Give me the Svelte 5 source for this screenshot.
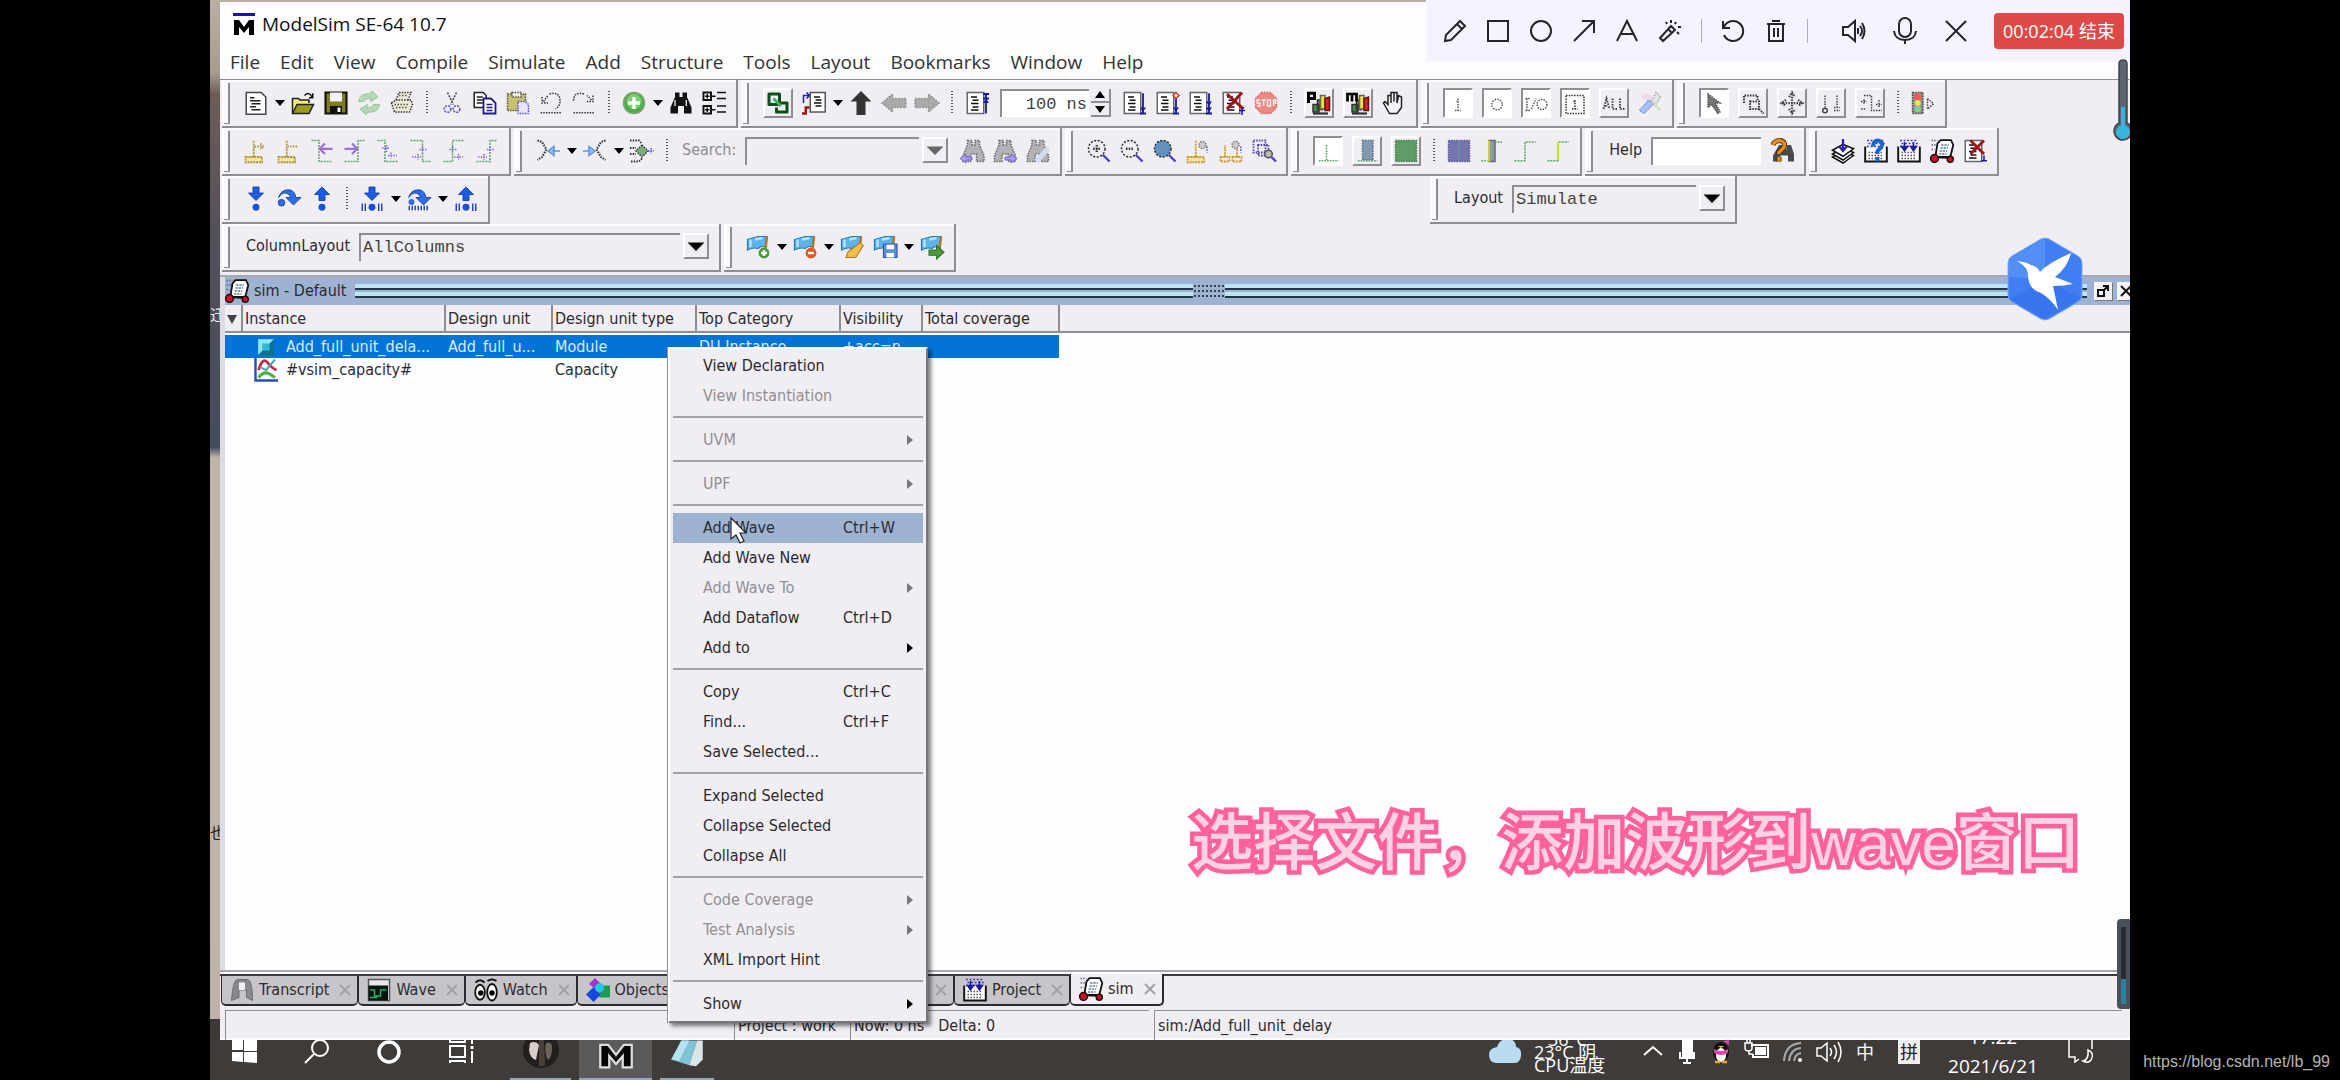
<script lang="ts">
  // Shared pieces of the 16x16 toolbar icons
  const page = '<path d="M1.5 1h11v14h-11z" fill="#fff" stroke="#666"/><path d="M4 4h4M5 6.2h4M4 8.4h5M5 10.6h4M4 12.6h5" stroke="#111"/>';
  const binoc = '<path d="M4 1h3v3h2V1h3v3l3 7v4h-5v-5H6v5H1v-4l3-7z"/>';
  const flag = '<path d="M1 3l7-2 6 0-1 7q-3-1-5 1-3-1-7 1z" fill="#5db4ea" stroke="#2b79b4" stroke-width=".8"/><path d="M3 3v5M6 3l5-1" stroke="#b5e4ff" stroke-width="1.600" fill="none"/><path d="M14 1l-1 9" stroke="#a8772f" stroke-width="1.600"/>';
  const lens = (fill: string) => `<circle cx="6.5" cy="6.5" r="5.500" fill="${fill}" stroke="#333" stroke-dasharray="1.4 1"/><path d="M10.5 10.5l4.5 4.5" stroke="#4a43c9" stroke-width="1.6"/>`;
  const cursorBase = (c: string) => `<path d="M1 12h11v3.500H1zM6.500 12V1M3 12h7" fill="#f2e2b4" stroke="${c}" stroke-width="1.200" stroke-dasharray="1.300 .6"/>`;
  const wave = (d: string) => `<path d="${d}" fill="none" stroke="#58a56c" stroke-dasharray="1.300 .7"/>`;
  const dotted = 'stroke-dasharray="1 .8"';
  const blueDown = '<path d="M6 0h4v4h3L8 9 3 4h3z" fill="#1c5be0" stroke="#123fae" stroke-width=".6"/>';
  const blueUp = '<path d="M6 9h4V5h3L8 0 3 5h3z" fill="#1c5be0" stroke="#123fae" stroke-width=".6"/>';
  const blueOver = '<path d="M1 7q2-6 8-5 3 1 3.500 5H16l-5 5-5-5h3Q8 4 5 4 3 4 1 7z" fill="#2f6de6" stroke="#123fae" stroke-width=".6"/>';
  const ticks = '<path d="M1.500 11v5M3.500 11v5M12.500 11v5M14.500 11v5" stroke="#2748c8"/><circle cx="8" cy="13.500" r="2.300" fill="#1c4fd6"/>';
  const calendar = '<path d="M.8 5v10h14.400V5" fill="#fff" stroke="#111" stroke-width="1.300"/><path d="M3 9h10M3 11h10M3 13h10" stroke="#555" stroke-dasharray="1 1"/><path d="M2 1h12M3 3h11M2 5h12" stroke="#3530a8" stroke-dasharray="1.200 1.200"/>';
  const cart = '<path d="M1 1h4M1 4h3M1 7h2" stroke="#668" stroke-dasharray="1 .8"/><path d="M5 3l2-2.300h7L15.500 4l-2 8H3.500z" fill="#fff" stroke="#111" stroke-width="1.200"/><path d="M7.500 4h5M7 6h5M6.500 8h5M6 10h5" stroke="#5a7f98" stroke-dasharray="1.500 .6"/><path d="M2 12l10 .5" stroke="#111" stroke-width="1.400"/><circle cx="3" cy="13" r="2.600" fill="#c01430" stroke="#300"/><circle cx="13.500" cy="13.500" r="2" fill="#c01430" stroke="#300"/>';
  const chart = '<path d="M4 14V9h4v5zM7 13V6h3v7" fill="#4b8b4b" stroke="#333"/><path d="M9 12V3h3v9z" fill="#f3e233" stroke="#665"/><path d="M12 13V5l3-1v9z" fill="#d42121" stroke="#611"/><path d="M4 15h10" stroke="#333" stroke-width="1.500"/>';
  const runArrow = '<path d="M14 1.500v13M12 15h4" stroke="#1a1a9c" stroke-width="1.200"/><path d="M12 11h4l-2 3z" fill="#1a1a9c"/>';

  const icons: Record<string, string> = {
    new: '<path d="M1.500 1h10l3 3v11.500h-13z" fill="#fff" stroke="#444"/><path d="M4 4.500h3M4 6.500h7M5 8.500h6M4 10.500h4M5 12.500h6" stroke="#222"/>',
    open: '<path d="M1 15V5h4l1 1h6v2" fill="#f4ec7a" stroke="#222"/><path d="M1 15l3-6h11l-3 6z" fill="#9b9a1c" stroke="#222"/><path d="M9 3q3-3 5 1M14.500 1.500V4.500H12" fill="none" stroke="#111"/>',
    save: '<path d="M1 1h14v14H1z" fill="#7d7d1e" stroke="#111" stroke-width="1.400"/><path d="M4 1h8v6H4z" fill="#f3f1f5"/><path d="M4 10h8v5H4z" fill="#111"/><path d="M9 11h2v3H9z" fill="#fff"/>',
    refresh: '<path d="M1 7q1-6 8-5l1-2 4 4-5 3 .5-2Q5 5 4.500 7zM15 9q-1 6-8 5l-1 2-4-4 5-3-.5 2q4 0 4.500-2z" fill="#b5d9b6" stroke="#8fc293" stroke-width=".6"/>',
    print: '<path d="M4 6l2-5h8l-2 5M1 8l3-2h10l1 3-2 5H3z" fill="#eee9d4" stroke="#333" stroke-dasharray="1 .8"/><path d="M6 3h6M3 9h9M4 11h8" stroke="#555" stroke-dasharray="1 1"/>',
    cut: '<path d="M5 1l4 8M11 1L7 9" stroke="#444" stroke-dasharray="1.300 .8"/><circle cx="5" cy="12" r="2.200" fill="none" stroke="#5a52d6" stroke-dasharray="1.400 .7"/><circle cx="11" cy="12" r="2.200" fill="none" stroke="#5a52d6" stroke-dasharray="1.400 .7"/>',
    copy: '<path d="M.8 1h6l2 2v8h-8z" fill="#fff" stroke="#222"/><path d="M2.500 4h4M2.500 6h4M2.500 8h4" stroke="#222"/><path d="M7 5h5l3 3v7H7z" fill="#fff" stroke="#1f1a8c" stroke-width="1.200"/><path d="M9 9h4M9 11h4M9 13h4" stroke="#1f1a8c"/>',
    paste: '<path d="M1 2h12v11H1z" fill="#c7bf72" stroke="#554" stroke-dasharray="1 .7"/><path d="M4 1h6v3H4z" fill="#eee" stroke="#554" stroke-dasharray="1 .7"/><path d="M8 7h5l2 2v6H8z" fill="#e6e5fa" stroke="#5851c4" stroke-dasharray="1 .7"/>',
    undo: `<path d="M2 4v4h4M3 7l3-4M7 2q7-2 7 5 0 3-3 5M1 14.500h14" fill="none" stroke="#333" ${dotted}/>`,
    redo: `<path d="M14 3v4h-4M13 6l-3-3M8 2Q1 0 1 7M1 14.500h14" fill="none" stroke="#333" ${dotted}/>`,
    add: '<circle cx="8" cy="8" r="7" fill="#4caf45" stroke="#7f9f7c"/><circle cx="8" cy="7" r="5" fill="#79cf6e"/><path d="M8 4v8M4 8h8" stroke="#fff" stroke-width="2.200"/>',
    find: `<g fill="#111">${binoc}</g><path d="M4 6v4M11.500 6v4" stroke="#fff" stroke-width=".8"/>`,
    tree: '<path d="M1 1h5v5H1zM1 10h5v5H1z" fill="#fff" stroke="#111" stroke-width="1.300"/><path d="M2 3.500h3M3.500 2v3M2 12.500h3M3.500 11v3M6 3.500h3M6 12.500h3M10 1h6M10 5h6M10 10h6M10 14h6" stroke="#111"/>',
    link: '<path d="M2 2h7v7H2z" fill="none" stroke="#0b4d1c" stroke-width="2" stroke-linejoin="round"/><path d="M8 8h6v6H7v-3" fill="none" stroke="#0b4d1c" stroke-width="2" stroke-linejoin="round"/><path d="M5 5l5 5" stroke="#4cae62" stroke-width="2"/>',
    source: '<path d="M5.500 1h10v13h-10z" fill="#fff" stroke="#555"/><path d="M8 4h4M9 6h4M8 8h5M9 10h4" stroke="#111"/><path d="M1 8V3h4M3 1l2 2-2 2" fill="none" stroke="#2020c0"/><path d="M0 15h2.500v-4H5" fill="none" stroke="#a01010" stroke-width="1.600"/>',
    up: '<path d="M8 0l7 7h-4v9H5V7H1z" fill="#333"/>',
    left: '<path d="M0 8l7-6v3h9v6H7v3z" fill="#aaa" stroke="#888" stroke-dasharray="1 1"/>',
    right: '<path d="M16 8L9 2v3H0v6h9v3z" fill="#aaa" stroke="#888" stroke-dasharray="1 1"/>',
    restart: `${page}<path d="M14 15V2M12 2h4M12 5h4" stroke="#1a1a9c" stroke-width="1.200"/><path d="M12 8l2-3 2 3z" fill="#1a1a9c"/>`,
    run: page + runArrow,
    runNext: `${page}${runArrow}<path d="M14 1l2 2-2 2-2-2z" fill="#fff" stroke="#d33"/>`,
    runAll: `${page}${runArrow}<path d="M12 7h4l-2 3z" fill="#1a1a9c"/>`,
    breakRun: `${page}<path d="M4 2l11 10M14 1L4 12" stroke="#a3141c" stroke-width="2"/><path d="M12 13h4M14 11v5" stroke="#1a1a9c"/>`,
    stop: '<path d="M5 1h6l4 4v6l-4 4H5l-4-4V5z" fill="#ea8a83" stroke="#e0665f" stroke-dasharray="1 .7"/><path d="M4 6H2v2h2v2H2M5 6h3M6.500 6v4M9 6h2v4H9zM13 10V6h1.500v2H13" fill="none" stroke="#fdf0f0" stroke-width=".9"/>',
    profile: `${chart}<path d="M1 8V1.500h4v3.500H1" fill="none" stroke="#000" stroke-width="2"/>`,
    memory: `${chart}<path d="M1 7V2h6v5M4 2v5" fill="none" stroke="#000" stroke-width="1.800"/>`,
    hand: '<path d="M5 15l-4-7 1-1 2 2V3h2v5V1h2v6V1h2v7l1-5 2 1v7l-3 4z" fill="#f4f4fa" stroke="#222"/>',
    in: `<path d="M8 5v8M6 13h4M7 7h1" stroke="#555" ${dotted}/>`,
    out: `<circle cx="8" cy="9" r="3.500" fill="none" stroke="#555" ${dotted}/>`,
    inout: `<path d="M2 5v8M1 5h3M1 13h3M5 12l3-7" stroke="#555" ${dotted}/><circle cx="12" cy="9" r="3.300" fill="none" stroke="#555" ${dotted}/>`,
    internal: `<path d="M2 3h12v12H2zM8 6v6M7 7h1M6 12h4" fill="none" stroke="#333" ${dotted}/>`,
    all: `<path d="M1 12l2-7 2 7M2 10h2M7 5v7h3M12 5v7h3" fill="none" stroke="#444" stroke-width="1.300" ${dotted}/>`,
    hammer: '<path d="M2 4l4-3 6 5-3 3z" fill="#ecd9ec"/><path d="M1 13l6-7 3 3-6 6z" fill="#a9c3f5" stroke="#7d9be0" stroke-dasharray="1 .6"/><path d="M9 7l3-6 3 3-3 5z" fill="#e1e9de" stroke="#aaa" stroke-dasharray="1 1"/><path d="M11 9l4 4" stroke="#cfe4cb" stroke-width="2"/>',
    select: '<path d="M4 2v9l2.500-2 4 6 1.500-1-3-6h3z" fill="#777" stroke="#555" stroke-dasharray="1 .6"/>',
    zoomMode: `<path d="M2 8V3h9v3M6 7h6v5H6zM12 12l3 3" fill="none" stroke="#333" stroke-width="1.400" ${dotted}/>`,
    pan: `<path d="M8 2v12M2 8h12M6 4l2-3 2 3M6 12l2 3 2-3M4 6L1 8l3 2M12 6l3 2-3 2" fill="none" stroke="#444" stroke-width="1.500" ${dotted}/>`,
    edge: `<path d="M4 3v8M12 3v8M10 13h4M10 11h4" stroke="#444" ${dotted}/><circle cx="4" cy="13" r="1.500" fill="none" stroke="#444"/>`,
    edit: `<path d="M4 3h5v10h7M2 7h4M4 5.500v3M14 6v5M12 9h4M2 12h3" fill="none" stroke="#444" ${dotted}/>`,
    traffic: `<path d="M1 1h7v14H1z" fill="#8d948d" stroke="#444" ${dotted}/><circle cx="4.500" cy="4" r="2.500" fill="#f05a5a"/><circle cx="4.500" cy="8" r="2" fill="#f2e05a"/><circle cx="4.500" cy="12" r="2.200" fill="#7fd08a"/><path d="M11 5l4 3.500-4 3.500z" fill="none" stroke="#444" ${dotted}/>`,
    cursorAdd: `${cursorBase('#b0962d')}<path d="M7 5h6M11 3l2 2-2 2" fill="none" stroke="#b0962d" stroke-width="1.200" ${dotted}/>`,
    cursorDel: `${cursorBase('#b0962d')}<path d="M7 5h7" stroke="#b0962d" stroke-width="1.200" ${dotted}/>`,
    edgePrev: `${wave('M1 1h5v14h9')}<path d="M7 6.500h8M10 3L6.500 6.500 10 10" fill="none" stroke="#9a72d8" stroke-width="1.500"/>`,
    edgeNext: `${wave('M1 15h9V1h5')}<path d="M1 6.500h8M6 3l3.500 3.500L6 10" fill="none" stroke="#9a72d8" stroke-width="1.500"/>`,
    fallPrev: `${wave('M1 1h5v14h9')}<path d="M4 6h5M7 4v5M8 11h6M10 9v4" stroke="#8764d6" ${dotted}/>`,
    fallNext: `${wave('M1 1h8v14h6')}<path d="M7 7h5M9 5v4M2 12h6M6 10v4" stroke="#8764d6" ${dotted}/>`,
    risePrev: `${wave('M1 15h6V1h8')}<path d="M5 7h5M7 5v4M8 12h6M11 10v4" stroke="#8764d6" ${dotted}/>`,
    riseNext: `${wave('M1 15h9V1h5')}<path d="M8 7h5M10 5v4M2 12h6M6 10v4" stroke="#8764d6" ${dotted}/>`,
    expandPrev: `<path d="M1 1l3 1 3 5-3 5-3 2" fill="none" stroke="#333" stroke-width="1.400" ${dotted}/><path d="M16 8h-5M12 5L8 8l4 3z" stroke="#5c93e6" fill="#9cc1f5"/>`,
    expandNext: `<path d="M15 1l-3 1-3 5 3 5 3 2" fill="none" stroke="#333" stroke-width="1.400" ${dotted}/><path d="M0 8h5M4 5l4 3-4 3z" stroke="#5c93e6" fill="#9cc1f5"/>`,
    expandBoth: `<path d="M0 1h6l2 2M8 13l-2 2H0M0 6h4M0 10h4" fill="none" stroke="#333" stroke-width="1.200" ${dotted}/><path d="M8 4l4 4-4 4-4-4z" fill="#7bb07b" stroke="#333" ${dotted}/><path d="M12 8h4M14 6v4" stroke="#5a52d6" ${dotted}/>`,
    findPrev: `<g fill="#b4b2b6" stroke="#666" ${dotted} transform="translate(1)">${binoc}</g><path d="M0 13l4-3v2h4v2H4v2z" fill="#a99df0" stroke="#6a5ad6" stroke-width=".6"/>`,
    findNext: `<g fill="#b4b2b6" stroke="#666" ${dotted}>${binoc}</g><path d="M16 13l-4-3v2H8v2h4v2z" fill="#a99df0" stroke="#6a5ad6" stroke-width=".6"/>`,
    findOptions: `<g fill="#b4b2b6" stroke="#666" ${dotted}>${binoc}</g><path d="M7 15l8-9" stroke="#d3dcee" stroke-width="3.500"/>`,
    zoomIn: `${lens('none')}<path d="M4 6.500h5M6.500 4v5" stroke="#333" stroke-width="1.600" ${dotted}/>`,
    zoomOut: `${lens('none')}<path d="M4 6.500h5" stroke="#333" stroke-width="1.600" ${dotted}/>`,
    zoomFull: lens('#5f93bd'),
    zoomCursor: `${cursorBase('#c99a28')}<circle cx="11" cy="4" r="2.300" fill="#ccc" stroke="#777" ${dotted}/><path d="M14 5v4" stroke="#4a43c9" ${dotted}/>`,
    zoomBetween: `<path d="M1 12h6v3H1zM9 12h6v3H9zM4 12V4M12 12V6" fill="none" stroke="#c99a28" stroke-width="1.200" stroke-dasharray="1.300 .6"/><circle cx="11" cy="4" r="2.300" fill="#ccc" stroke="#777" ${dotted}/><path d="M14.500 5v4" stroke="#4a43c9" ${dotted}/>`,
    zoomArea: `<path d="M1 1h8v8H1zM4 4h7v7H4z" fill="none" stroke="#4a43a9" stroke-width="1.200" ${dotted}/><circle cx="11" cy="10" r="2.500" fill="#bbb" stroke="#555"/><path d="M13 12l3 3" stroke="#4a43c9" stroke-width="1.600"/>`,
    waveA: '<path d="M7 4v10M2 14.500h13" stroke="#4aa05c" stroke-dasharray="1 .8"/>',
    waveB: '<path d="M5 1h7v13H5z" fill="#8698b0" stroke="#556d8c" stroke-dasharray="1 .7"/><path d="M2 14.500h13" stroke="#4aa05c" stroke-dasharray="1 .8"/>',
    waveC: '<path d="M1 1h14v14H1z" fill="#5f9c66" stroke="#3f7c46" stroke-dasharray="1 .7"/>',
    waveD: '<path d="M1 1h14v14H1z" fill="#7574ac" stroke="#5553a0" stroke-dasharray="1 .7"/><path d="M8 1v14" stroke="#5aa2a2" stroke-dasharray="1 .7"/>',
    waveE: '<path d="M6 1h4v14H6z" fill="#8b9cb0" stroke="#667"/><path d="M6 1v14" stroke="#d6d22e" stroke-width="1.300"/><path d="M1 14.500h4M10 2h5" stroke="#4aa05c" stroke-dasharray="1 .8"/>',
    waveF: wave('M1 14.500h7V2h7'),
    waveG: `${wave('M1 14.500h7V2h7')}<path d="M8 2v12" stroke="#c4e02a" stroke-width="1.400"/>`,
    findHelp: '<g fill="#4a4848" transform="translate(1)"><path d="M5 4h3v3h2V4h3l2 6v5h-4v-4H6v4H1v-4z"/></g><path d="M2 4q1-3 5-3 4 1 2 5L6 9v1M6 12v3" fill="none" stroke="#4a2c0c" stroke-width="3.400"/><path d="M2 4q1-3 5-3 4 1 2 5L6 9v1M6 12v3" fill="none" stroke="#e58e22" stroke-width="2.200"/>',
    compile: '<path d="M1 12l7-4 7 3-7 5z" fill="#fff" stroke="#111"/><path d="M1 10l7-4 7 3-7 5z" fill="#fff" stroke="#111"/><path d="M1 7.500l7-4 7 3-7 5z" fill="#fff" stroke="#111"/><path d="M8 0v7M5.500 5L8 8l2.500-3" fill="none" stroke="#2a1fae" stroke-width="1.500"/>',
    compileAsk: `${calendar}<path d="M6 5q0-4 3.500-4 4 1 2 4.500L9 8v2M9 12v3" fill="none" stroke="#1568c8" stroke-width="2.600"/>`,
    compileAll: `${calendar}<path d="M5 2v4M11 2v4M3 5h4L5 8zM9 5h4l-2 3z" fill="#1f19a8" stroke="#1f19a8"/>`,
    simulate: cart,
    breakSim: `${page}<path d="M5 1l9 9M14 1L5 10" stroke="#a3141c" stroke-width="1.900"/><path d="M12 14.500h4M14 11v4" stroke="#1a1a9c"/>`,
    stepInto: `${blueDown}<circle cx="8" cy="13.500" r="2.300" fill="#1c4fd6"/>`,
    stepOver: `${blueOver}<circle cx="3" cy="10.500" r="2.200" fill="#2f6de6" stroke="#123fae" stroke-width=".6"/>`,
    stepOut: `${blueUp}<circle cx="8" cy="13.500" r="2.300" fill="#1c4fd6"/>`,
    stepIntoAll: blueDown + ticks,
    stepOverAll: `${blueOver}<circle cx="3" cy="10" r="2" fill="#2f6de6"/><path d="M1 14h14" stroke="#2748c8" stroke-width="3" stroke-dasharray="1 1"/>`,
    stepOutAll: blueUp + ticks,
    bookAdd: `${flag}<circle cx="12" cy="12" r="3.600" fill="#4a9a3c"/><path d="M12 10v4M10 12h4" stroke="#fff" stroke-width="1.600"/>`,
    bookDel: `${flag}<circle cx="12" cy="12" r="3.600" fill="#e0591c"/><path d="M10 12h4" stroke="#fff" stroke-width="1.600"/>`,
    bookEdit: `${flag}<path d="M4 15l1.500-4 8-6 2 2-5 8z" fill="#f0bf4c" stroke="#a57a24" stroke-width=".7"/>`,
    bookSave: `${flag}<path d="M7 6h9v9H7z" fill="#5d8fd6" stroke="#2c5ca8" stroke-width=".8"/><path d="M9 6.500h5v3H9zM9 12h5v3H9z" fill="#fff"/>`,
    bookGo: `${flag}<path d="M6 10h5V7l5 4.500-5 4.500v-2.500H6z" fill="#4a9a3c" stroke="#2f7326" stroke-width=".7"/>`,
    transcript: '<path d="M1 15Q2 1 5 1h7q3 1 3 14l-4-2V8H6v5z" fill="#8b888d" stroke="#6a686c" stroke-width=".6"/><path d="M6 3h4v5H6z" fill="#f4f2f6"/>',
    wave: '<path d="M1 1h14v14H1z" fill="#e9e7ee" stroke="#555"/><path d="M1 5h13v10H1z" fill="#06140e"/><path d="M2 8h3v4h4V8h4M2 13h5" stroke="#1fae62" fill="none"/>',
    watch: '<path d="M1 3q3-3 6 0M9 2q3-2 6 0" fill="none" stroke="#111" stroke-width="1.300"/><ellipse cx="4" cy="9.500" rx="3.200" ry="5" fill="#fff" stroke="#111" stroke-width="1.200"/><ellipse cx="12" cy="9.500" rx="3.200" ry="5.500" fill="#fff" stroke="#111" stroke-width="1.200"/><circle cx="4.500" cy="10" r="1.800"/><circle cx="12" cy="10" r="1.800"/>',
    objects: '<path d="M6 0l4 4-4 3-4-3z" fill="#a233c9"/><path d="M9 5h7v8H9z" fill="#1f9a55"/><path d="M5 6l5 5-5 5-5-5z" fill="#1648e0"/><circle cx="9" cy="6.500" r="3" fill="#22c6e8"/>',
    module: '<path d="M1 1h14v14H1z" fill="#1fa7cd"/><path d="M1 1h14l-4 4H5v6l-4 4z" fill="#8fe6f7"/><path d="M15 1v14H1l4-4h6V5z" fill="#0d6f93"/><path d="M5 5h6v6H5z" fill="#31b9dc"/>',
    capacity: '<path d="M1 0v15h15" fill="none" stroke="#2a4fb4" stroke-width="1.600"/><path d="M3 8q3-9 6-5t6 5" fill="none" stroke="#c5283a" stroke-width="1.800"/><path d="M4 6l4 2 6-7" fill="none" stroke="#4d9fb4" stroke-width="1.300"/><path d="M3 13q4-5 8-2l3 2" fill="none" stroke="#4cae3f" stroke-width="2"/>'
  };

  // "^" drop-down caret, "|" separator, "+" raised button, "-" pressed button, "@" text widget
  const rows: string[][][] = [
    [
      ['new', '^', 'open', 'save', 'refresh', 'print', '|', 'cut', 'copy', 'paste', 'undo', 'redo', '|', 'add', '^', 'find', 'tree'],
      ['+link', 'source', '^', 'up', 'left', 'right', '|', 'restart', '@time', 'run', 'runNext', 'runAll', 'breakRun', 'stop', '|', '+profile', '+memory', 'hand'],
      ['-in', '-out', '-inout', '-internal', '+all', 'hammer'],
      ['-select', '+zoomMode', '+pan', '+edge', '+edit', '|', 'traffic']
    ],
    [
      ['cursorAdd', 'cursorDel', 'edgePrev', 'edgeNext', 'fallPrev', 'fallNext', 'risePrev', 'riseNext'],
      ['expandPrev', '^', 'expandNext', '^', 'expandBoth', '|', '@search', 'findPrev', 'findNext', 'findOptions'],
      ['zoomIn', 'zoomOut', 'zoomFull', 'zoomCursor', 'zoomBetween', 'zoomArea'],
      ['-waveA', '+waveB', '+waveC', '|', 'waveD', 'waveE', 'waveF', 'waveG'],
      ['@help', 'findHelp'],
      ['compile', 'compileAsk', 'compileAll', 'simulate', 'breakSim']
    ],
    [
      ['stepInto', 'stepOver', 'stepOut', '|', 'stepIntoAll', '^', 'stepOverAll', '^', 'stepOutAll'],
      ['@layout']
    ],
    [
      ['@columns'],
      ['bookAdd', '^', 'bookDel', '^', 'bookEdit', 'bookSave', '^', 'bookGo']
    ]
  ];

  const menus = ['File', 'Edit', 'View', 'Compile', 'Simulate', 'Add', 'Structure', 'Tools', 'Layout', 'Bookmarks', 'Window', 'Help'];

  interface Entry {
    label: string;
    keys?: string;
    sub?: boolean;
    off?: boolean;
    hot?: boolean;
  }

  const groups: Entry[][] = [
    [{ label: 'View Declaration' }, { label: 'View Instantiation', off: true }],
    [{ label: 'UVM', sub: true, off: true }],
    [{ label: 'UPF', sub: true, off: true }],
    [
      { label: 'Add Wave', keys: 'Ctrl+W', hot: true },
      { label: 'Add Wave New' },
      { label: 'Add Wave To', sub: true, off: true },
      { label: 'Add Dataflow', keys: 'Ctrl+D' },
      { label: 'Add to', sub: true }
    ],
    [{ label: 'Copy', keys: 'Ctrl+C' }, { label: 'Find...', keys: 'Ctrl+F' }, { label: 'Save Selected...' }],
    [{ label: 'Expand Selected' }, { label: 'Collapse Selected' }, { label: 'Collapse All' }],
    [{ label: 'Code Coverage', sub: true, off: true }, { label: 'Test Analysis', sub: true, off: true }, { label: 'XML Import Hint' }],
    [{ label: 'Show', sub: true }]
  ];

  const tabs = [
    { label: 'Transcript', icon: 'transcript' },
    { label: 'Wave', icon: 'wave' },
    { label: 'Watch', icon: 'watch' },
    { label: 'Objects', icon: 'objects' },
    { label: '', icon: '' },
    { label: 'Project', icon: 'compileAll' },
    { label: 'sim', icon: 'simulate' }
  ];

  let active = $state('sim');
  let runLength = $state('100 ns');
</script>

{#snippet icon(name: string)}
  <svg class="icon" viewBox="0 0 16 16" aria-hidden="true">{@html icons[name] ?? ''}</svg>
{/snippet}

{#snippet combo(id: string, value: string)}
  <span class="combo {id}">
    <select {id}><option>{value}</option></select>
    <svg class="drop" viewBox="0 0 26 26" aria-hidden="true"><path d="M3 9h20l-10 10z" /></svg>
  </span>
{/snippet}

{#snippet tool(item: string)}
  {#if item === '^'}
    <button class="caret" aria-label="More"><svg viewBox="0 0 10 6"><path d="M0 0h10L5 6z" /></svg></button>
  {:else if item === '|'}
    <span class="sep"></span>
  {:else if item === '@time'}
    <span class="time">
      <input aria-label="Run length" bind:value={runLength} />
      <span class="spin">
        <button aria-label="Longer"><svg viewBox="0 0 10 8"><path d="M0 7h10L5 0z" /></svg></button>
        <button aria-label="Shorter"><svg viewBox="0 0 10 8"><path d="M0 1h10L5 8z" /></svg></button>
      </span>
    </span>
  {:else if item === '@search'}
    <label class="muted" for="search">Search:</label>
    {@render combo('search', '')}
  {:else if item === '@help'}
    <label for="help">Help</label>
    <input id="help" class="help" />
  {:else if item === '@layout'}
    <label for="layout">Layout</label>
    {@render combo('layout', 'Simulate')}
  {:else if item === '@columns'}
    <label for="columns">ColumnLayout</label>
    {@render combo('columns', 'AllColumns')}
  {:else if item[0] === '+' || item[0] === '-'}
    <button class="tool box" class:down={item[0] === '-'} aria-label={item.slice(1)}>{@render icon(item.slice(1))}</button>
  {:else}
    <button class="tool" aria-label={item}>{@render icon(item)}</button>
  {/if}
{/snippet}

<div class="stage">
  <div class="screen">
    <div class="desktop">
      <span class="scrap upper">迁</span>
      <span class="scrap lower">也</span>

      <main class="window">
        <header class="titlebar">
          <svg class="logo" viewBox="0 0 22 22"><path d="M0 0h22v3H0z" fill="#1a12a8" /><path d="M1 22V7h5l5 7 5-7h5v15h-5v-8l-5 6-5-6v8z" /></svg>
          <h1>ModelSim SE-64 10.7</h1>
        </header>
        <nav class="menubar">
          {#each menus as menu}
            <button>{menu}</button>
          {/each}
        </nav>

        <div class="toolbars">
          {#each rows as row}
            <div class="row">
              {#each row as bar}
                <div class="toolbar" class:pushed={bar[0] === '@layout'}>
                  {#each bar as item}
                    {@render tool(item)}
                  {/each}
                </div>
              {/each}
            </div>
          {/each}
        </div>

        <section class="pane">
          <header class="panebar">
            {@render icon('simulate')}
            <h2>sim - Default</h2>
            <span class="grip">
              <svg viewBox="0 0 32 14"><path d="M1 2h30M1 7h30M1 12h30" /></svg>
            </span>
            <button aria-label="Undock"><svg viewBox="0 0 12 12"><path d="M1 5h6v6H1zM6 6l4-4M6 1h5v5" /></svg></button>
            <button aria-label="Close"><svg viewBox="0 0 12 12"><path d="M1 1l10 10M11 1L1 11" /></svg></button>
          </header>

          <div class="tree">
            <table>
              <colgroup>
                <col class="c0" /><col class="c1" /><col class="c2" /><col class="c3" /><col class="c4" /><col class="c5" /><col class="c6" /><col />
              </colgroup>
              <thead>
                <tr>
                  <th><svg class="sort" viewBox="0 0 10 10"><path d="M0 1h10L5 10z" /></svg></th>
                  <th>Instance</th>
                  <th>Design unit</th>
                  <th>Design unit type</th>
                  <th>Top Category</th>
                  <th>Visibility</th>
                  <th>Total coverage</th>
                  <th></th>
                </tr>
              </thead>
              <tbody>
                <tr class="selected">
                  <td colspan="2"><span class="node">{@render icon('module')}Add_full_unit_dela...</span></td>
                  <td>Add_full_u...</td>
                  <td>Module</td>
                  <td>DU Instance</td>
                  <td>+acc=n</td>
                  <td></td>
                  <td class="rest"></td>
                </tr>
                <tr>
                  <td colspan="2"><span class="node">{@render icon('capacity')}#vsim_capacity#</span></td>
                  <td></td>
                  <td>Capacity</td>
                  <td></td>
                  <td></td>
                  <td></td>
                  <td class="rest"></td>
                </tr>
              </tbody>
            </table>
          </div>
        </section>

        <div class="tabs">
          {#each tabs as tab}
            <div class="tab" class:active={tab.label === active} class:wide={!tab.label}>
              {#if tab.label}
                <button class="pick" onclick={() => (active = tab.label)}>{@render icon(tab.icon)}{tab.label}</button>
              {/if}
              <button class="shut" aria-label="Close tab"><svg viewBox="0 0 12 12"><path d="M1 1l10 10M11 1L1 11" /></svg></button>
            </div>
          {/each}
        </div>

        <footer class="status">
          <span></span>
          <span>Project : work</span>
          <span><b>Now: 0 ns</b><b>Delta: 0</b></span>
          <span>sim:/Add_full_unit_delay</span>
        </footer>

        <div class="popup">
          {#each groups as group}
            <ul>
              {#each group as entry}
                <li>
                  <button class:hot={entry.hot} disabled={entry.off}>
                    <span>{entry.label}</span>
                    <kbd>{entry.keys ?? ''}</kbd>
                    {#if entry.sub}
                      <svg viewBox="0 0 6 10"><path d="M0 0l6 5-6 5z" /></svg>
                    {/if}
                  </button>
                </li>
              {/each}
            </ul>
          {/each}
        </div>
      </main>

      <svg class="pointer" viewBox="0 0 17 27"><path d="M1 1v21l5-4 4 8 4-2-4-8h6z" fill="#fff" stroke="#223" stroke-width="1.200" /></svg>

      <div class="recorder">
        <div class="group">
          <button aria-label="Pencil"><svg viewBox="0 0 24 24"><path d="M2 22l1-6L17 2l5 5L8 21zM14 5l5 5" /></svg></button>
          <button aria-label="Rectangle"><svg viewBox="0 0 24 24"><path d="M2 2h20v20H2z" /></svg></button>
          <button aria-label="Ellipse"><svg viewBox="0 0 24 24"><circle cx="12" cy="12" r="10" /></svg></button>
          <button aria-label="Arrow"><svg viewBox="0 0 24 24"><path d="M2 22L22 2M10 2h12v12" /></svg></button>
          <button aria-label="Text"><svg viewBox="0 0 24 24"><path d="M2 22L12 2l10 20M5 15h14" /></svg></button>
          <button aria-label="Wand"><svg viewBox="0 0 24 24"><path d="M2 19L13 7l4 4L5 22zM10 10l4 4M13 1v3M18 3l-1 2M20 8h3M19 13l2 2M8 3l1 2" /></svg></button>
        </div>
        <i></i>
        <div class="group">
          <button aria-label="Undo"><svg viewBox="0 0 24 24"><path d="M2 2v7h7M3 8a10 10 0 1 1 0 8" /></svg></button>
          <button aria-label="Clear"><svg viewBox="0 0 24 24"><path d="M3 5h18M5 5v17h14V5M8 2h8M10 9v9M14 9v9" /></svg></button>
        </div>
        <i></i>
        <div class="group loose">
          <button aria-label="Sound"><svg viewBox="0 0 24 24"><path d="M1 8h5l7-6v20l-7-6H1zM16 9v6M18 7q4 5 0 10M20 4q5 8 0 16" /></svg></button>
          <button aria-label="Microphone"><svg viewBox="0 0 24 24"><rect x="6" y="-1" width="12" height="19" rx="6" /><path d="M1 12q1 9 11 9t11-9M12 21v4" /></svg></button>
          <button aria-label="Close recorder"><svg viewBox="0 0 24 24"><path d="M2 2l20 20M22 2L2 22" /></svg></button>
        </div>
        <button class="finish">00:02:04 结束</button>
      </div>

      <svg class="thermo" viewBox="0 0 18 84">
        <path d="M5 64V5q0-4 4-4t4 4v59a9 9 0 1 1-8 0z" fill="#5c6670" stroke="#3c464e" stroke-width="1.500" />
        <circle cx="9" cy="73" r="7" fill="#38b5dc" /><path d="M9 48v22" stroke="#38b5dc" stroke-width="4" />
      </svg>

      <svg class="bird" viewBox="0 0 76 84">
        <path d="M34 2q4-2 8 0l29 17q4 2 4 7v32q0 5-4 7L42 82q-4 2-8 0L5 65q-4-2-4-7V26q0-5 4-7z" fill="#3f7ff2" stroke="#7fa9ee" />
        <path d="M38 1L2 22v18l36 2z" fill="#5b95f7" opacity=".7" /><path d="M38 42L3 62l35 20 36-21z" fill="#3572ea" opacity=".7" />
        <path d="M10 24q10 1 14 4 6 1 9 7 8-9 31-19-3 14-16 24l18 7q-9 2-20 2 2 9 5 24-7-11-17-17-13-4-13-18 0-8-11-14z" fill="#fff" />
      </svg>

      <div class="gadget"><span></span></div>

      <p class="caption">选择文件，添加波形到wave窗口</p>
    </div>

    <footer class="taskbar">
      <div class="apps">
        <button aria-label="Start"><svg viewBox="0 0 26 24"><path d="M0 0h11v10H0zM12 0h13v11H12zM0 12h11v10L0 21zM12 12h13v11l-13-1z" fill="#fff" stroke="none" /></svg></button>
        <button aria-label="Search"><svg viewBox="0 0 26 24"><circle cx="16" cy="8" r="8" /><path d="M10 14L1 23" /></svg></button>
        <button aria-label="Cortana"><svg viewBox="0 0 26 24"><circle cx="13" cy="12" r="10" stroke-width="3.500" /></svg></button>
        <button aria-label="Task view"><svg viewBox="0 0 26 24"><path d="M2 0v2h15V0M2 6h15v11H2zM2 23v-2h15v2M24 0v4M24 11v12" /><path d="M22.500 6h3v3h-3z" fill="#fff" stroke="none" /></svg></button>
        <button class="app first" aria-label="Player"><svg viewBox="0 0 36 30"><circle cx="18" cy="10" r="18" fill="#241f1c" stroke="none" /><path d="M7 3q6-3 9 2l-3 15q-6-2-7-10z" fill="#d8cfc6" stroke="none" /><path d="M16 0h5l1 26h-6z" fill="#4a4038" stroke="none" /><path d="M23 3q6-2 6 5 0 9-4 12-4-6-2-17z" fill="#6b645a" stroke="none" /></svg></button>
        <button class="app current" aria-label="ModelSim"><svg viewBox="0 0 32 26"><path d="M2 24V4h7l7 9 7-9h7v20h-8V14l-6 7-6-7v10z" fill="#050505" stroke="#ddd" stroke-width="2" /></svg></button>
        <button class="app last" aria-label="Notepad"><svg viewBox="0 0 32 26"><path d="M11 0h14l-7 22-16-5z" fill="#7fc3d6" stroke="none" /><path d="M11 0h7L9 18l-7-1z" fill="#b5e4ee" stroke="none" /><path d="M25 0h5v17l-6 6-6-1z" fill="#d9e6e9" stroke="none" /></svg></button>
      </div>
      <div class="tray">
        <svg class="cloud" viewBox="0 0 34 24"><path d="M8 23q-7-1-7-8t8-8q3-9 12-8 7 1 7 8 6 1 5 9-1 7-6 7z" fill="#b9dcf0" stroke="none" /></svg>
        <span class="weather"><span>36°C</span><span>23°C 阴</span><span>CPU温度</span></span>
        <svg class="small chevron" viewBox="0 0 20 24"><path d="M1 15l9-8 9 8" /></svg>
        <svg class="small" viewBox="0 0 20 24"><path d="M6 0h9v16H6z" fill="#fff" /><path d="M3 12v6h14v-6M10 18v5M6 23h8" /></svg>
        <svg class="small" viewBox="0 0 20 24"><ellipse cx="10" cy="12" rx="8" ry="10" fill="#111" stroke="none" /><ellipse cx="10" cy="15" rx="5" ry="7" fill="#fff" stroke="none" /><path d="M3 9q7 4 14 0v4q-7 4-14 0z" fill="#e33fb0" stroke="none" /><path d="M12 1l6-1v5z" fill="#e33fb0" stroke="none" /><path d="M7 6h6l-3 2z" fill="#f2c230" stroke="none" /><path d="M4 22h5M11 22h5" stroke="#f2a81c" stroke-width="2.500" /></svg>
        <svg viewBox="0 0 26 24"><path d="M8 7V5h16v12H9v-3" /><path d="M11 7h11v8H11z" fill="#fff" stroke="none" /><path d="M1 3h7v5q0 3-3.500 3T1 8zM3 3V0M6 3V0M5 11v3h4" stroke-width="1.500" /></svg>
        <svg class="small" viewBox="0 0 20 24"><path d="M1 21Q2 4 18 3M6 21q1-12 12-13M11 21q1-7 7-8" stroke="#aaa" /><circle cx="17" cy="20" r="2" fill="#fff" stroke="none" /></svg>
        <svg viewBox="0 0 26 24"><path d="M1 8h4l6-5v18l-6-5H1zM14 8q3 4 0 8M18 5q5 7 0 14M22 2q6 10 0 20" stroke-width="1.500" /></svg>
        <span class="ime">中</span>
        <span class="ime boxed">拼</span>
        <span class="clock"><span>17:22</span><span>2021/6/21</span></span>
        <svg viewBox="0 0 26 24"><path d="M1 0v17h6v5l4-3M24 0v9" stroke-width="1.500" /><path d="M20 10q7 3 3 10-3 4-8 1 6-1 5-11z" stroke-width="1.500" /></svg>
      </div>
    </footer>
  </div>
  <a class="source" href="https://blog.csdn.net/lb_99">https://blog.csdn.net/lb_99</a>
</div>

<style>
  :global(body) {
    margin: 0;
    background: #000;
  }

  .stage {
    position: relative;
    box-sizing: border-box;
    height: 100vh;
    padding: 0 210px;
    overflow: hidden;
    background: #000;
    color: #2c2a2f;
    font: 16px/20px "DejaVu Sans Condensed", "DejaVu Sans", "Noto Sans CJK SC", sans-serif;
  }

  button,
  input,
  select {
    margin: 0;
    padding: 0;
    border: 0;
    background: none;
    color: inherit;
    font: inherit;
  }

  svg {
    display: block;
    overflow: visible;
  }

  .screen {
    display: grid;
    grid-template-rows: minmax(0, 1fr) 40px;
    height: 100%;
  }

  .desktop {
    position: relative;
    min-height: 0;
    padding: 2px 0 0 10px;
    overflow: hidden;
    background: linear-gradient(#b8b0a4 0, #a79c90 7%, #6d5d58 9%, #54505a 22%, #444c5c 43%, #c0b3ab 44%, #bfb2aa 98%, #3c3936 98%);
  }

  /* desktop icon labels, mostly hidden behind the window */
  .scrap {
    position: absolute;
    left: 0;
    color: #eee;
  }

  .upper {
    top: 306px;
  }

  .lower {
    top: 824px;
    color: #222;
  }

  .window {
    position: relative;
    display: flex;
    flex-direction: column;
    height: 100%;
    box-sizing: border-box;
    padding-bottom: 2px;
    background: #fdfcff;
  }

  .titlebar {
    display: flex;
    align-items: center;
    gap: 7px;
    height: 44px;
    padding-left: 13px;
  }

  .logo {
    width: 22px;
    height: 22px;
  }

  h1 {
    margin: 0;
    font: 19px/24px "Open Sans", sans-serif;
    color: #111;
  }

  .menubar {
    display: flex;
    gap: 20px;
    height: 33px;
    padding-left: 10px;
    font: 19px/32px "Open Sans", sans-serif;
    color: #333;
  }

  .menubar button {
    height: 32px;
  }

  .toolbars {
    flex: none;
    padding: 0 2px 3px;
    border-top: 1px solid #8f8d92;
    background: #f1eef3;
  }

  .row {
    display: flex;
    gap: 3px;
    height: 48px;
  }

  .toolbar {
    position: relative;
    display: flex;
    align-items: center;
    gap: 9px;
    box-sizing: border-box;
    padding: 0 10px 0 22px;
    border-right: 2px solid #8f8d92;
    border-bottom: 2px solid #8f8d92;
    box-shadow: inset 2px 2px #fff;
  }

  .toolbar::before {
    content: '';
    position: absolute;
    left: 2px;
    top: 3px;
    bottom: 2px;
    width: 4px;
    border-right: 2px solid #8f8d92;
    border-bottom: 1px solid #8f8d92;
    background: #fbfaff;
  }

  .pushed {
    margin-left: auto;
    margin-right: 391px;
  }

  .tool {
    flex: none;
  }

  .icon {
    flex: none;
    width: 24px;
    height: 24px;
  }

  .box {
    display: grid;
    place-items: center;
    box-sizing: border-box;
    width: 30px;
    height: 30px;
    border: 2px solid;
    border-color: #fff #8f8d92 #8f8d92 #fff;
  }

  .down {
    border-color: #8f8d92 #fff #fff #8f8d92;
    background: #fff;
  }

  .caret {
    width: 5px;
  }

  .caret svg {
    width: 10px;
    height: 6px;
    margin-left: -2px;
  }

  .sep {
    width: 8px;
    height: 24px;
    background: repeating-linear-gradient(#555 0 1px, transparent 1px 3px) center / 2px 100% no-repeat;
  }

  label {
    margin-left: 2px;
    padding-bottom: 3px;
  }

  .muted {
    color: #8d8b90;
  }

  .time {
    display: flex;
    gap: 2px;
    margin: 0 2px;
  }

  .time input {
    box-sizing: border-box;
    width: 89px;
    height: 28px;
    padding-right: 2px;
    border-top: 2px solid #8f8d92;
    border-left: 2px solid #8f8d92;
    background: #fff;
    color: #444;
    font: 17px/20px "Liberation Mono", monospace;
    text-align: right;
  }

  .spin {
    display: grid;
    width: 20px;
  }

  .spin button {
    display: grid;
    place-items: center;
    height: 14px;
    border-right: 2px solid #8f8d92;
    border-bottom: 2px solid #8f8d92;
    box-sizing: border-box;
  }

  .spin svg {
    width: 10px;
    height: 8px;
  }

  .combo {
    display: flex;
    align-items: flex-start;
    gap: 3px;
  }

  .combo select {
    appearance: none;
    box-sizing: border-box;
    width: 184px;
    height: 28px;
    padding-left: 2px;
    border-top: 2px solid #8f8d92;
    border-left: 2px solid #8f8d92;
    color: #444;
    font: 17px/20px "Liberation Mono", monospace;
  }

  .columns select {
    width: 321px;
  }

  .search {
    margin-right: 3px;
  }

  .search select {
    width: 174px;
  }

  .drop {
    box-sizing: border-box;
    width: 26px;
    height: 26px;
    border: 2px solid;
    border-color: #fff #8f8d92 #8f8d92 #fff;
  }

  .search .drop {
    fill: #666;
  }

  .help {
    width: 108px;
    height: 26px;
    border-top: 2px solid #8f8d92;
    border-left: 2px solid #8f8d92;
    background: #fff;
  }

  .pane {
    flex: 1;
    display: flex;
    flex-direction: column;
    min-height: 0;
    padding-left: 5px;
    border-top: 2px solid #a9a8ae;
    border-bottom: 2px solid #a9a8ae;
    background: #dedce3;
  }

  .panebar {
    display: flex;
    align-items: center;
    gap: 5px;
    height: 28px;
    background: #9eb3d1;
  }

  .panebar h2 {
    margin: 0;
    font: inherit;
  }

  .grip {
    flex: 1;
    display: grid;
    place-items: center;
    height: 14px;
    margin: 0 2px 0 4px;
    padding-right: 24px;
    background: linear-gradient(#bfe3f3 0 4px, #1e3a48 4px 6px, #9eb3d1 6px 8px, #bfe3f3 8px 12px, #1e3a48 12px 14px);
  }

  .grip svg {
    width: 32px;
    height: 14px;
    fill: none;
    stroke: #33434f;
    stroke-width: 2;
    stroke-dasharray: 2 2;
    background: #9eb3d1;
  }

  .panebar button {
    display: grid;
    place-items: center;
    width: 18px;
    height: 18px;
    background: #f6f4f9;
    box-shadow: 1px 1px #777;
  }

  .panebar button:last-child {
    margin-right: -5px;
  }

  .panebar button svg {
    width: 12px;
    height: 12px;
    fill: none;
    stroke: #111;
    stroke-width: 2;
  }

  .tree {
    flex: 1;
    background: #fdfcff;
  }

  table {
    width: 100%;
    border-collapse: collapse;
    table-layout: fixed;
  }

  .c0 {
    width: 17px;
  }

  .c1 {
    width: 203px;
  }

  .c2 {
    width: 107px;
  }

  .c3 {
    width: 144px;
  }

  .c4 {
    width: 144px;
  }

  .c5 {
    width: 82px;
  }

  .c6 {
    width: 137px;
  }

  th {
    box-sizing: border-box;
    height: 27px;
    padding: 1px 0 0 2px;
    border-right: 2px solid #8f8d92;
    border-bottom: 2px solid #8f8d92;
    background: #f1eef3;
    font-weight: normal;
    text-align: left;
    white-space: nowrap;
  }

  th:last-child {
    border-right: 0;
  }

  .sort {
    width: 10px;
    height: 10px;
    fill: #444;
  }

  tbody::before {
    content: '';
    display: block;
    height: 2px;
  }

  td {
    height: 24px;
    padding: 0 0 0 3px;
    overflow: hidden;
    white-space: nowrap;
  }

  .selected td:not(.rest) {
    background: #0274d8;
    color: #d8ecff;
  }

  .selected td {
    height: 23px;
  }

  .node {
    display: flex;
    align-items: center;
    gap: 8px;
    padding-left: 26px;
  }

  .selected .icon {
    width: 18px;
    height: 18px;
    margin: 0 3px;
  }

  .tabs {
    display: flex;
    height: 34px;
    margin-top: 2px;
    padding-left: 1px;
    border-top: 2px solid #3c3a40;
    background: #f1eef3;
  }

  .tab {
    display: flex;
    align-items: center;
    gap: 10px;
    box-sizing: border-box;
    height: 30px;
    padding: 0 6px 0 8px;
    border: 1px solid #2c2a30;
    border-width: 0 1px 2px;
    border-radius: 0 0 5px 5px;
    background: #c7c5ca;
  }

  .active {
    margin-top: -2px;
    height: 32px;
    border-right-width: 2px;
    background: #f1eef3;
  }

  .wide {
    width: 256px;
    justify-content: flex-end;
  }

  .pick {
    display: flex;
    align-items: center;
    gap: 5px;
  }

  .shut svg {
    width: 12px;
    height: 12px;
    stroke: #a3a1a6;
    stroke-width: 2;
  }

  .status {
    display: grid;
    grid-template-columns: 504px 111px 299px 1fr;
    gap: 5px;
    height: 28px;
    padding: 0 8px 0 5px;
    background: #f1eef3;
  }

  .status span {
    display: flex;
    gap: 14px;
    padding-left: 3px;
    border-top: 1px solid #8f8d92;
    border-left: 1px solid #8f8d92;
    line-height: 29px;
    white-space: nowrap;
  }

  .status b {
    font-weight: normal;
  }

  .popup {
    position: absolute;
    left: 448px;
    top: 345px;
    box-sizing: border-box;
    width: 260px;
    padding: 2px 3px;
    border: 2px solid;
    border-color: #fff #77757a #77757a #fff;
    background: #f1eef3;
    box-shadow: 3px 3px 4px rgba(0, 0, 0, 0.5), -1px 0 #999;
  }

  .popup ul {
    margin: 0;
    padding: 0;
    list-style: none;
  }

  .popup ul + ul {
    margin-top: 5px;
    padding-top: 7px;
    border-top: 2px solid #a3a1a6;
  }

  .popup button {
    display: grid;
    grid-template-columns: 140px 64px 6px;
    align-items: center;
    box-sizing: border-box;
    width: 100%;
    height: 30px;
    padding-left: 30px;
    text-align: left;
    white-space: nowrap;
  }

  .popup button:disabled {
    color: #908e93;
    fill: #77757a;
  }

  .popup svg {
    width: 6px;
    height: 10px;
  }

  .popup kbd {
    font: inherit;
  }

  .popup .hot {
    background: #9eb3d1;
  }

  .pointer {
    position: absolute;
    left: 520px;
    top: 517px;
    width: 17px;
    height: 27px;
  }

  .recorder {
    position: absolute;
    right: 0;
    top: 0;
    display: flex;
    align-items: center;
    box-sizing: border-box;
    height: 62px;
    padding: 0 6px 0 17px;
    background: #f4f3ff;
  }

  .group {
    display: flex;
    gap: 19px;
  }

  .loose {
    gap: 27px;
    margin: 0 26px 0 15px;
  }

  .recorder svg {
    width: 24px;
    height: 24px;
    fill: none;
    stroke: #25232b;
    stroke-width: 2;
  }

  .recorder i {
    width: 1px;
    height: 24px;
    margin: 0 19px;
    background: #b0aebb;
  }

  .finish {
    width: 130px;
    height: 36px;
    border-radius: 4px;
    background: #dd4947;
    color: #fff;
    font: 18px/36px "Open Sans", "Noto Sans CJK SC", sans-serif;
    white-space: nowrap;
  }

  .thermo {
    position: absolute;
    right: -2px;
    top: 59px;
    width: 18px;
    height: 84px;
  }

  .bird {
    position: absolute;
    right: 47px;
    top: 237px;
    width: 76px;
    height: 84px;
  }

  .gadget {
    position: absolute;
    right: 0;
    bottom: 31px;
    box-sizing: border-box;
    width: 13px;
    height: 90px;
    padding: 8px 0 5px 4px;
    border-radius: 4px 0 0 4px;
    background: #4a5058;
  }

  .gadget span {
    display: block;
    width: 5px;
    height: 100%;
    background: linear-gradient(#272c33 68%, #2e7ea0 68%);
  }

  .caption {
    position: absolute;
    right: 50px;
    bottom: 148px;
    margin: 0;
    color: #fdd3e4;
    font: 500 62px/96px "Liberation Sans", "Noto Sans CJK SC", sans-serif;
    white-space: nowrap;
    paint-order: stroke fill;
    -webkit-text-stroke: 9px #ff619b;
  }

  .taskbar {
    display: flex;
    justify-content: space-between;
    overflow: hidden;
    background: #3e3b39;
    color: #fff;
    font: 19px/29px "Open Sans", "Noto Sans CJK SC", sans-serif;
  }

  .taskbar svg {
    flex: none;
    width: 26px;
    height: 24px;
    fill: none;
    stroke: #fff;
    stroke-width: 2;
  }

  .apps {
    display: flex;
    align-items: flex-start;
    gap: 46px;
    padding-left: 22px;
  }

  .app {
    display: grid;
    justify-content: center;
    width: 61px;
    height: 40px;
    margin-right: -38px;
    border-bottom: 2px solid #8fa9c9;
    box-sizing: border-box;
  }

  .apps .app svg {
    width: 36px;
    height: 30px;
  }

  .apps .first {
    margin-left: -10px;
  }

  .apps .current {
    width: 73px;
    background: #5c5a59;
  }

  .apps .last {
    width: 54px;
  }

  .tray {
    display: flex;
    align-items: flex-start;
    gap: 12px;
    padding-right: 36px;
  }

  .taskbar .small {
    width: 22px;
  }

  .taskbar .chevron {
    margin-left: 18px;
  }

  .taskbar .cloud {
    width: 34px;
  }

  .weather {
    display: grid;
    width: 78px;
    margin-top: -7px;
    font-size: 18px;
    line-height: 13px;
    white-space: nowrap;
  }

  .weather span:first-child {
    padding-left: 14px;
  }

  .ime {
    width: 22px;
    font-size: 18px;
    line-height: 24px;
    text-align: center;
  }

  .boxed {
    margin-left: 10px;
    background: #eee;
    color: #222;
  }

  .clock {
    display: flex;
    flex-direction: column;
    align-items: center;
    justify-content: flex-end;
    height: 41px;
    margin: 0 18px 0 16px;
  }

  .source {
    position: absolute;
    right: 10px;
    bottom: 8px;
    color: #b4b4b4;
    font: 16px/20px "Liberation Sans", sans-serif;
    text-decoration: none;
  }
</style>
